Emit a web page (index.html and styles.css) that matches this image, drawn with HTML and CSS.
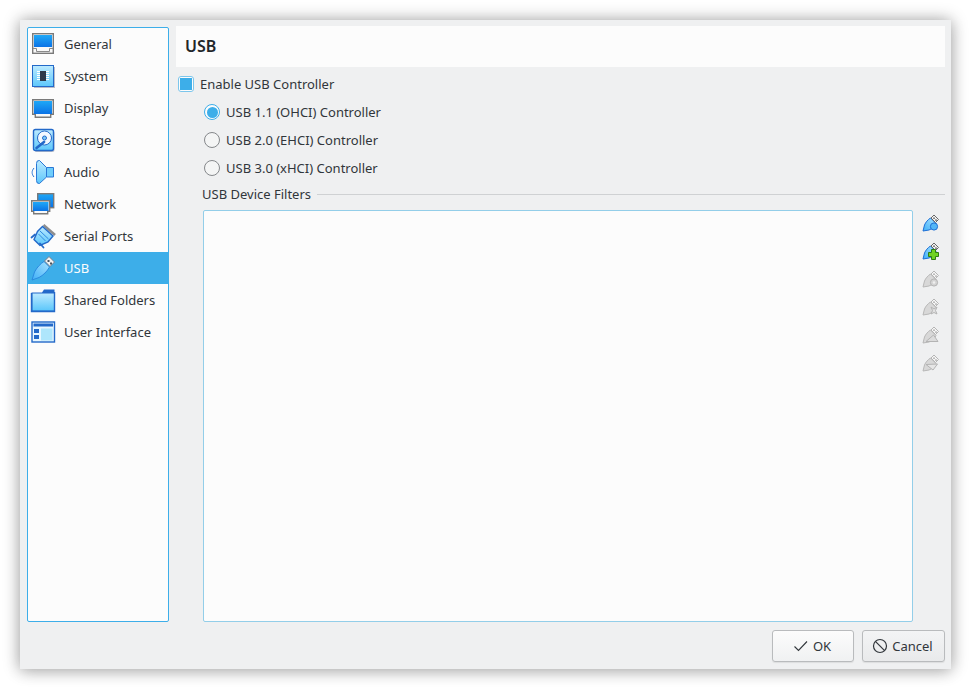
FILE: index.html
```html
<!DOCTYPE html>
<html lang="en">
<head>
<meta charset="utf-8">
<title>USB Settings</title>
<link rel="stylesheet" href="styles.css">
</head>
<body>
<svg class="defs" aria-hidden="true">
  <defs>
    <linearGradient id="scr" x1="0" y1="0" x2="0" y2="1"><stop offset="0" stop-color="#1fa8f7"/><stop offset="1" stop-color="#0a72e6"/></linearGradient>
    <linearGradient id="lb" x1="0" y1="0" x2="0" y2="1"><stop offset="0" stop-color="#bceaff"/><stop offset="1" stop-color="#5cc7fb"/></linearGradient>
    <linearGradient id="usbb" x1="1" y1="0" x2="0" y2="1"><stop offset="0" stop-color="#a8e2ff"/><stop offset="1" stop-color="#3fb0f8"/></linearGradient>
    <symbol id="usb" viewBox="0 0 18 18">
      <path d="M1 17 L2.500 11 C3.500 8.500 6 5.500 8.500 4 L14 9.500 C13 12 10 15 7 16 Z" fill="url(#usbb)" stroke="#1c6fd6"/>
      <path d="M9 4 L12 1 L16.500 5.500 L13.500 8.500 Z" fill="#f4f4f4" stroke="#666"/>
      <rect x="11.300" y="3.500" width="1.400" height="1.400" fill="#444"/><rect x="13.300" y="5.400" width="1.400" height="1.400" fill="#444"/>
    </symbol>
    <symbol id="usbg" viewBox="0 0 18 18">
      <path d="M1 17 L2.500 11 C3.500 8.500 6 5.500 8.500 4 L14 9.500 C13 12 10 15 7 16 Z" fill="#d8d8d8" stroke="#b8b8b8"/>
      <path d="M9 4 L12 1 L16.500 5.500 L13.500 8.500 Z" fill="#f6f6f6" stroke="#b4b4b4"/>
      <rect x="11.300" y="3.500" width="1.400" height="1.400" fill="#999"/><rect x="13.300" y="5.400" width="1.400" height="1.400" fill="#999"/>
    </symbol>
  </defs>
</svg>
<main class="window">
  <div class="body">
    <nav class="sidebar">
      <div class="item">
        <svg class="nav-icon" viewBox="0 0 26 26"><rect x="2.700" y="2.700" width="20.600" height="19.600" fill="#f8f8f8" stroke="#7a7a7a" stroke-width="1.400"/><rect x="4" y="4" width="18" height="12" fill="url(#scr)"/><path d="M3 17.500H6.500V20.500H19.500V17.500H23" fill="none" stroke="#8a8a8a"/></svg>
        <span>General</span>
      </div>
      <div class="item">
        <svg class="nav-icon" viewBox="0 0 26 26"><rect x="4" y="4" width="21" height="21" fill="#b8bcc8"/><rect x="2.500" y="2.500" width="21" height="21" fill="url(#lb)" stroke="#2369c9"/><path d="M7 8.500h12M7 10.500h12M7 12.500h12M7 14.500h12M7 16.500h12" stroke="#fff"/><rect x="10" y="8" width="6" height="10" fill="#2e3a4c"/></svg>
        <span>System</span>
      </div>
      <div class="item">
        <svg class="nav-icon" viewBox="0 0 26 26"><path d="M2.700 4.700h20.600v14.600h-2.600v3H5.300v-3H2.700z" fill="#f8f8f8" stroke="#7a7a7a" stroke-width="1.400"/><rect x="4" y="6" width="18" height="13" fill="url(#scr)"/></svg>
        <span>Display</span>
      </div>
      <div class="item">
        <svg class="nav-icon" viewBox="0 0 26 26"><rect x="4.500" y="4" width="20" height="21" rx="2" fill="#b8bcc8"/><rect x="3.500" y="2.500" width="20" height="21" rx="2" fill="url(#lb)" stroke="#2369c9" stroke-width="1.400"/><circle cx="14.500" cy="11" r="7" fill="#f2f8ff" stroke="#2369c9"/><circle cx="14.500" cy="11" r="2" fill="#7cc9f7" stroke="#2369c9"/><path d="M6.500 21L14 15" stroke="#2369c9" stroke-width="2.600" stroke-linecap="round"/></svg>
        <span>Storage</span>
      </div>
      <div class="item">
        <svg class="nav-icon" viewBox="0 0 26 26"><path d="M16.500 8.500h7v9.500h-7z" fill="#6fcdfb" stroke="#2a78d6"/><path d="M6.500 4.500 Q6.500 1 9.500 1.500 L16.500 8.500 V18 L9.500 24.500 Q6.500 25 6.500 21.500 Z" fill="url(#lb)" stroke="#2a78d6"/><path d="M4 9C1.500 12 1.500 15 4 18" fill="none" stroke="#2a78d6"/></svg>
        <span>Audio</span>
      </div>
      <div class="item">
        <svg class="nav-icon" viewBox="0 0 26 26"><rect x="7.700" y="2.700" width="16" height="14" fill="url(#scr)" stroke="#7a7a7a" stroke-width="1.400"/><path d="M1.700 9.700h18v10.600h-2v2.500H3.700v-2.500h-2z" fill="#f8f8f8" stroke="#7a7a7a" stroke-width="1.400"/><rect x="3" y="11" width="15.500" height="9" fill="url(#scr)"/></svg>
        <span>Network</span>
      </div>
      <div class="item">
        <svg class="nav-icon" viewBox="0 0 26 26"><path d="M13.500 2L25 12" stroke="#8e8e8e" stroke-width="2.600"/><path d="M12.500 3.500L23 13 18 19 10 22.500 4 16.500 7.500 8.500Z" fill="url(#lb)" stroke="#2369c9" stroke-width="1.400"/><path d="M10 8L18.500 16M8.500 11L15.500 18" stroke="#2e8be0" fill="none"/><path d="M1.500 14.500L5 11.500M13.500 24.500L10 20.500" stroke="#2369c9" stroke-width="1.800" stroke-linecap="round"/></svg>
        <span>Serial Ports</span>
      </div>
      <div class="item active">
        <svg class="nav-icon" viewBox="0 0 26 26"><path d="M2 25 L4.500 17 C6.500 13 10.500 8.500 14 6.500 L19.500 12 C17.500 16 13 20.500 9 22.500 Z" fill="url(#usbb)" stroke="#2a8ae0"/><path d="M14.500 6 L19 1.500 L24.500 7 L20 11.500 Z" fill="#f2f2f2" stroke="#6d7f8f"/><rect x="17.500" y="5" width="2" height="2" fill="#4a5560"/><rect x="20" y="7.500" width="2" height="2" fill="#4a5560"/></svg>
        <span>USB</span>
      </div>
      <div class="item">
        <svg class="nav-icon" viewBox="0 0 26 26"><path d="M1.500 5.500H12L14 2.500H24.500V24.500H1.500Z" fill="#2369c9"/><path d="M2.500 6.500H24V23.500H2.500Z" fill="url(#lb)"/><path d="M1.500 6v18.500h23V5" fill="none" stroke="#2369c9" stroke-width="1.400"/></svg>
        <span>Shared Folders</span>
      </div>
      <div class="item">
        <svg class="nav-icon" viewBox="0 0 26 26"><rect x="2" y="3" width="22.500" height="20" fill="#e8f7ff" stroke="#2369c9" stroke-width="1.400"/><rect x="3.500" y="4.500" width="19.500" height="3" fill="#2369c9"/><rect x="11" y="9.500" width="11.500" height="12" fill="#aee6fc"/><rect x="4" y="10" width="5" height="4" fill="#2369c9"/><rect x="4" y="16" width="5" height="4" fill="#2369c9"/></svg>
        <span>User Interface</span>
      </div>
    </nav>
    <section class="content">
      <h1 class="title">USB</h1>
      <div class="check-row"><span class="checkbox"><span class="check-fill"></span></span><span>Enable USB Controller</span></div>
      <div class="radio-row"><span class="radio on"><span class="radio-dot"></span></span><span>USB 1.1 (OHCI) Controller</span></div>
      <div class="radio-row"><span class="radio"></span><span>USB 2.0 (EHCI) Controller</span></div>
      <div class="radio-row"><span class="radio"></span><span>USB 3.0 (xHCI) Controller</span></div>
      <div class="group-title"><span>USB Device Filters</span><span class="group-line"></span></div>
      <div class="filters">
        <div class="filter-list"></div>
        <div class="tools">
          <svg class="tool" viewBox="0 0 18 18"><use href="#usb"/><circle cx="12" cy="12.500" r="3.600" fill="#52b6f7" stroke="#1c6fd6"/></svg>
          <svg class="tool" viewBox="0 0 18 18"><use href="#usb"/><path d="M9.500 7.500h4v3h3v4h-3v3h-4v-3h-3v-4h3z" fill="#6fd321" stroke="#2f7d12"/></svg>
          <svg class="tool" viewBox="0 0 18 18"><use href="#usbg"/><circle cx="12" cy="12.500" r="3.600" fill="#d4d4d4" stroke="#b4b4b4"/><circle cx="12" cy="12.500" r="1.200" fill="#f0f0f0"/></svg>
          <svg class="tool" viewBox="0 0 18 18"><use href="#usbg"/><path d="M9 9l3 2 3-2-1.500 3.500L15 16l-3-1.500L9 16l1.500-3.500z" fill="#e2e2e2" stroke="#b4b4b4"/></svg>
          <svg class="tool" viewBox="0 0 18 18"><use href="#usbg"/><path d="M4 15.500L11.500 9l4.500 6.500z" fill="#dcdcdc" stroke="#b4b4b4"/></svg>
          <svg class="tool" viewBox="0 0 18 18"><use href="#usbg"/><path d="M4 10.500L15.500 10 11 16z" fill="#e6e6e6" stroke="#b4b4b4"/></svg>
        </div>
      </div>
    </section>
  </div>
  <footer class="footer">
    <button class="btn ok" type="button">
      <svg class="btn-icon" viewBox="0 0 16 16"><path d="M1.500 8.500L5.500 12.500L14 3.500" fill="none" stroke="#31363b" stroke-width="1.100"/></svg>
      <span>OK</span>
    </button>
    <button class="btn cancel" type="button">
      <svg class="btn-icon" viewBox="0 0 16 16"><circle cx="8" cy="8" r="6.500" fill="none" stroke="#31363b" stroke-width="1.200"/><path d="M3.400 3.400L12.600 12.600" stroke="#31363b" stroke-width="1.200"/></svg>
      <span>Cancel</span>
    </button>
  </footer>
</main>
</body>
</html>
```
FILE: styles.css
```css
html, body {
  margin: 0;
  height: 100%;
  background: #fff;
  overflow: hidden;
}
.defs {
  position: absolute;
  width: 0;
  height: 0;
}
.window {
  box-sizing: border-box;
  width: 931px;
  height: 649px;
  margin: 20px 0 0 20px;
  padding: 6px 6px 7px 7px;
  display: flex;
  flex-direction: column;
  gap: 8px;
  background: #eff0f1;
  box-shadow: 0 0 16px rgba(0, 0, 0, .32), 0 3px 14px rgba(0, 0, 0, .12);
  color: #31363b;
  font: 13px/18px "Noto Sans", sans-serif;
}
.body {
  flex: 1;
  display: flex;
  gap: 7px;
  min-height: 0;
}
.sidebar {
  box-sizing: border-box;
  flex: none;
  width: 142px;
  margin-top: 1px;
  background: #fcfcfc;
  border: 1px solid #3daee9;
  border-radius: 2px;
}
.item {
  height: 32px;
  display: flex;
  align-items: center;
  gap: 8px;
  padding-left: 2px;
}
.item.active {
  background: #3daee9;
  color: #fcfcfc;
}
.nav-icon {
  flex: none;
  width: 26px;
  height: 26px;
}
.content {
  flex: 1;
  min-width: 0;
  display: flex;
  flex-direction: column;
}
.title {
  margin: 0;
  height: 41px;
  padding-left: 9px;
  background: #fcfcfc;
  font-size: 16px;
  font-weight: 600;
  line-height: 41px;
  color: #232629;
}
.check-row {
  height: 18px;
  margin-top: 8px;
  padding-left: 2px;
  display: flex;
  align-items: center;
  gap: 6px;
}
.checkbox {
  box-sizing: border-box;
  width: 16px;
  height: 16px;
  padding: 1px;
  border: 1px solid #7cc6ec;
  border-radius: 3px;
  background: #fcfcfc;
}
.check-fill {
  display: block;
  width: 100%;
  height: 100%;
  background: #3daee9;
}
.radio-row {
  height: 18px;
  margin-top: 10px;
  padding-left: 28px;
  display: flex;
  align-items: center;
  gap: 6px;
}
.radio {
  box-sizing: border-box;
  width: 16px;
  height: 16px;
  padding: 1.500px;
  border: 1px solid #85888b;
  border-radius: 50%;
  background: #f4f5f5;
}
.radio.on {
  border-color: #3daee9;
  background: #fcfcfc;
}
.radio-dot {
  display: block;
  width: 100%;
  height: 100%;
  border-radius: 50%;
  background: #3daee9;
}
.group-title {
  height: 18px;
  margin-top: 8px;
  padding-left: 26px;
  display: flex;
  align-items: center;
  gap: 6px;
}
.group-line {
  flex: 1;
  height: 1px;
  background: #cfd1d3;
}
.filters {
  flex: 1;
  min-height: 0;
  margin-top: 7px;
  padding-left: 27px;
  display: flex;
  gap: 7px;
}
.filter-list {
  flex: 1;
  box-sizing: border-box;
  background: #fcfcfc;
  border: 1px solid #93cee9;
  border-radius: 2px;
}
.tools {
  flex: none;
  box-sizing: border-box;
  width: 25px;
  padding: 4px 3px 0 0;
  display: flex;
  flex-direction: column;
  align-items: center;
  gap: 10px;
}
.tool {
  width: 18px;
  height: 18px;
}
.footer {
  height: 32px;
  flex: none;
  display: flex;
  justify-content: flex-end;
  gap: 8px;
}
.btn {
  box-sizing: border-box;
  height: 32px;
  padding: 0 2px 0 0;
  display: flex;
  align-items: center;
  justify-content: center;
  gap: 4px;
  border: 1px solid #b9bbbd;
  border-radius: 3px;
  background: linear-gradient(#fcfcfc, #f0f1f2);
  box-shadow: 0 1px 1px rgba(0, 0, 0, .08);
  color: #31363b;
  font: inherit;
}
.btn.ok {
  width: 82px;
}
.btn.cancel {
  width: 83px;
  background: linear-gradient(#f3f4f5, #e9eaeb);
}
.btn-icon {
  width: 16px;
  height: 16px;
}
```
